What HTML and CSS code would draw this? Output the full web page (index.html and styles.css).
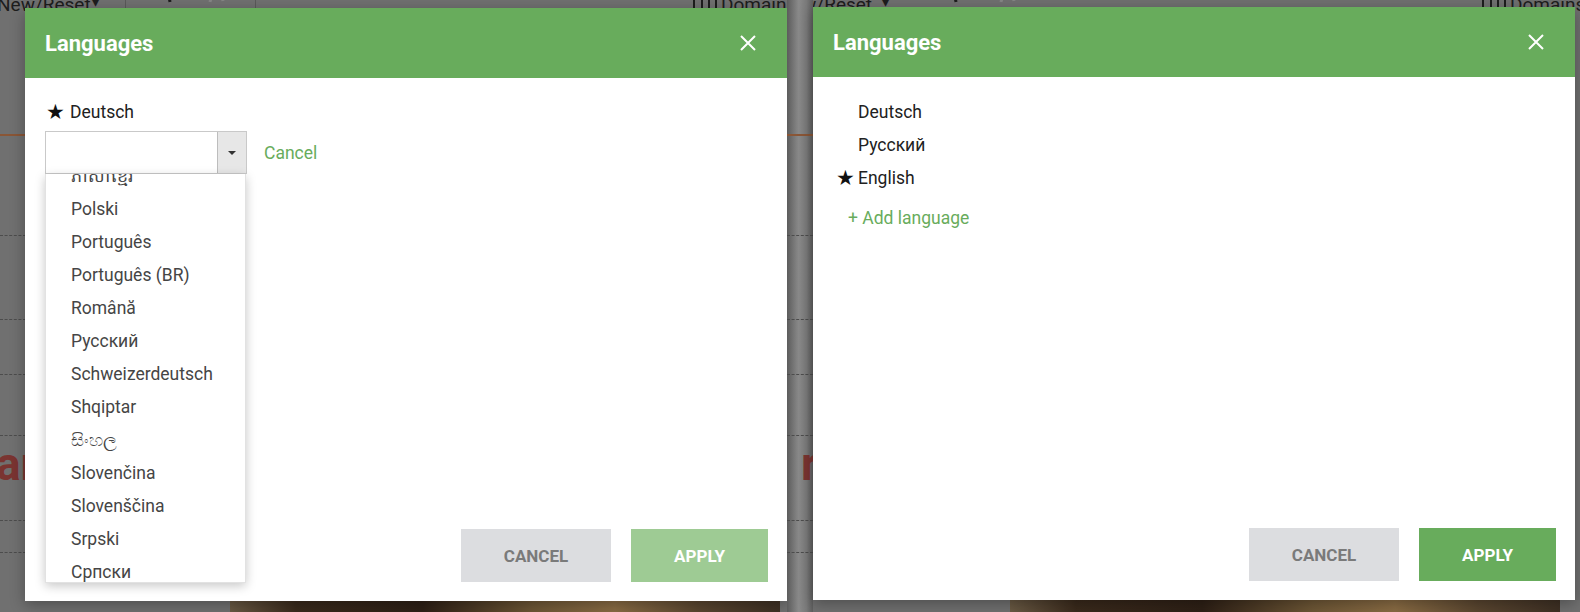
FILE: index.html
```html
<!DOCTYPE html>
<html lang="en">
<head>
    <meta charset="UTF-8">
    <meta name="viewport" content="width=device-width, initial-scale=1.0">
    <title>Languages</title>
    <link rel="stylesheet" href="styles.css">
</head>
<body>
    <div class="screens">

        <!-- left shot: picking a language from the list -->
        <section class="screen screen-left">
            <div class="backdrop">
                <span class="bar-text bar-text-left">New/Reset</span>
                <span class="caret caret-left">&#9662;</span>
                <span class="bar-sep sep-1"></span>
                <svg class="undo undo-left" width="22" height="14" viewBox="0 0 22 14"><path d="M4 2 C8 -4 18 -3 19 6" fill="none" stroke="#1c1c1c" stroke-width="3"/></svg>
                <svg class="redo redo-left" width="18" height="14" viewBox="0 0 18 14"><path d="M2 6 C4 -3 14 -3 15 5" fill="none" stroke="#858585" stroke-width="3"/></svg>
                <span class="bar-sep sep-2"></span>
                <span class="domains domains-left"><span class="grid-icon"></span>Domains</span>
                <span class="orange-line"></span>
                <span class="dash d1"></span>
                <span class="dash d2"></span>
                <span class="dash d3"></span>
                <span class="dash d4"></span>
                <span class="dash d5"></span>
                <span class="dash d6"></span>
                <span class="red-word red-left">ar</span>
                <span class="photo photo-left"></span>
            </div>

            <div class="dialog">
                <div class="dialog-header">
                    <h2 class="dialog-title">Languages</h2>
                    <svg class="close" width="16" height="16" viewBox="0 0 16 16"><path d="M1 1 L15 15 M15 1 L1 15" stroke="#fff" stroke-width="2"/></svg>
                </div>

                <div class="dialog-body body-edit">
                    <div class="lang-row"><span class="star">&#9733;</span>Deutsch</div>

                    <div class="combo-line">
                        <div class="combo">
                            <div class="combo-box">
                                <span class="combo-value"></span>
                                <span class="combo-arrow"><i class="tri"></i></span>
                            </div>
                            <div class="menu">
                                <ul class="menu-list">
                                    <li>ភាសាខ្មែរ</li>
                                    <li>Polski</li>
                                    <li>Português</li>
                                    <li>Português (BR)</li>
                                    <li>Română</li>
                                    <li>Русский</li>
                                    <li>Schweizerdeutsch</li>
                                    <li>Shqiptar</li>
                                    <li>සිංහල</li>
                                    <li>Slovenčina</li>
                                    <li>Slovenščina</li>
                                    <li>Srpski</li>
                                    <li>Српски</li>
                                    <li>Suomi</li>
                                </ul>
                            </div>
                        </div>
                        <a class="link" href="#">Cancel</a>
                    </div>
                </div>

                <div class="dialog-footer">
                    <button class="btn btn-cancel">CANCEL</button>
                    <button class="btn btn-apply" disabled>APPLY</button>
                </div>
            </div>
        </section>

        <!-- right shot: list after adding English -->
        <section class="screen screen-right">
            <div class="backdrop">
                <span class="bar-text bar-text-right">ew/Reset</span>
                <span class="caret caret-right">&#9662;</span>
                <svg class="undo undo-right" width="22" height="14" viewBox="0 0 22 14"><path d="M4 2 C8 -4 18 -3 19 6" fill="none" stroke="#1c1c1c" stroke-width="3"/></svg>
                <svg class="redo redo-right" width="18" height="14" viewBox="0 0 18 14"><path d="M2 6 C4 -3 14 -3 15 5" fill="none" stroke="#858585" stroke-width="3"/></svg>
                <span class="domains domains-right"><span class="grid-icon"></span>Domains</span>
                <span class="strip"></span>
                <span class="orange-line"></span>
                <span class="dash d1"></span>
                <span class="dash d2"></span>
                <span class="dash d3"></span>
                <span class="dash d4"></span>
                <span class="dash d5"></span>
                <span class="dash d6"></span>
                <span class="red-word red-right">r</span>
                <span class="photo photo-right"></span>
            </div>

            <div class="dialog">
                <div class="dialog-header">
                    <h2 class="dialog-title">Languages</h2>
                    <svg class="close" width="16" height="16" viewBox="0 0 16 16"><path d="M1 1 L15 15 M15 1 L1 15" stroke="#fff" stroke-width="2"/></svg>
                </div>

                <div class="dialog-body body-list">
                    <div class="lang-item"><span class="star"></span>Deutsch</div>
                    <div class="lang-item"><span class="star"></span>Русский</div>
                    <div class="lang-item"><span class="star">&#9733;</span>English</div>
                    <a class="link add-link" href="#">+ Add language</a>
                </div>

                <div class="dialog-footer">
                    <button class="btn btn-cancel">CANCEL</button>
                    <button class="btn btn-apply">APPLY</button>
                </div>
            </div>
        </section>

    </div>
</body>
</html>
```

FILE: styles.css
```css
* {
    box-sizing: border-box;
}

body {
    margin: 0;
    font-family: Roboto, "Noto Sans", "DejaVu Sans", sans-serif;
    background-color: #6e6e6e;
    overflow: hidden;
}

.screens {
    display: flex;
    width: 1580px;
    height: 612px;
}

.screen {
    position: relative;
    height: 612px;
    overflow: hidden;
    background-color: #707070;
}

.screen-left {
    width: 787px;
}

.screen-right {
    width: 793px;
}

/* dimmed app behind the dialogs */
.backdrop {
    position: absolute;
    inset: 0;
    z-index: 0;
}

.bar-text {
    position: absolute;
    top: -7px;
    font-size: 19px;
    color: #1d1d1d;
}

.bar-text-left { left: -3px; }
.bar-text-right { left: 5px; }

.caret {
    position: absolute;
    top: -6px;
    font-size: 14px;
    color: #1d1d1d;
}

.caret-left { left: 92px; }
.caret-right { left: 95px; }

.bar-sep {
    position: absolute;
    top: 0;
    width: 1px;
    height: 8px;
    background-color: #5a5a5a;
}

.sep-1 { left: 125px; }
.sep-2 { left: 255px; }

.undo,
.redo {
    position: absolute;
    top: -4px;
}

.undo-left { left: 151px; }
.redo-left { left: 208px; }
.undo-right { left: 150px; }
.redo-right { left: 212px; }

.domains {
    position: absolute;
    top: -7px;
    display: flex;
    align-items: center;
    gap: 4px;
    font-size: 19px;
    color: #1d1d1d;
}

.domains-left { left: 693px; }
.domains-right { left: 695px; }

.grid-icon {
    width: 24px;
    height: 14px;
    border: 2px solid #1d1d1d;
    background: linear-gradient(90deg, transparent 6px, #1d1d1d 6px, #1d1d1d 8px, transparent 8px, transparent 13px, #1d1d1d 13px, #1d1d1d 15px, transparent 15px);
}

.strip {
    position: absolute;
    left: 0;
    top: 0;
    width: 26px;
    height: 612px;
    background: linear-gradient(90deg, #5c5c5c 0, #8a8a8a 45%, #7a7a7a 75%, #5e5e5e 100%);
}

.orange-line {
    position: absolute;
    left: 0;
    top: 134px;
    width: 26px;
    height: 2px;
    background-color: #8a5636;
}

.dash {
    position: absolute;
    left: 0;
    width: 26px;
    border-top: 1px dashed #4c4c4c;
}

.d1 { top: 235px; }
.d2 { top: 319px; }
.d3 { top: 374px; }
.d4 { top: 435px; }
.d5 { top: 520px; }
.d6 { top: 552px; }

.red-word {
    position: absolute;
    top: 437px;
    font-size: 46px;
    font-weight: bold;
    color: #7a3431;
}

.red-left { left: -4px; }
.red-right { left: 14px; }

.photo {
    position: absolute;
    top: 600px;
    height: 12px;
    background: linear-gradient(90deg, #6a5a44 0, #3a2a1c 12%, #2e2016 35%, #6e5736 55%, #8a6c44 70%, #5a4630 85%, #3e3024 100%);
}

.photo-left { left: 230px; width: 550px; }
.photo-right { left: 223px; width: 550px; }

/* dialog */
.dialog {
    position: relative;
    z-index: 1;
    display: flex;
    flex-direction: column;
    width: 762px;
    height: 593px;
    margin: 8px 0 0 25px;
    background-color: #fff;
    box-shadow: 0 4px 14px rgba(0, 0, 0, 0.3);
}

.screen-right .dialog {
    margin: 7px 0 0 26px;
}

.dialog-header {
    flex: none;
    display: flex;
    align-items: center;
    justify-content: space-between;
    height: 70px;
    padding: 0 31px 0 20px;
    background-color: #68ac5c;
}

.dialog-title {
    margin: 0;
    font-size: 22px;
    font-weight: bold;
    color: #fff;
}

.dialog-body {
    flex: 1;
    padding: 0 20px;
    font-size: 17.5px;
    color: #212121;
}

.body-edit {
    padding-top: 23px;
}

.body-list {
    padding-top: 19px;
}

.star {
    display: inline-block;
    width: 25px;
    padding-left: 1px;
    font-family: "DejaVu Sans", sans-serif;
    font-size: 21px;
    line-height: 1;
    vertical-align: -1px;
    color: #111;
}

.lang-row {
    line-height: 22px;
}

.lang-item {
    height: 33px;
    line-height: 33px;
}

.body-list .star {
    padding-left: 3px;
}

.combo-line {
    display: flex;
    align-items: center;
    gap: 17px;
    margin-top: 8px;
}

.combo {
    position: relative;
}

.combo-box {
    display: flex;
    width: 202px;
    height: 43px;
    border: 1px solid #c9c9c9;
    background-color: #fff;
}

.combo-value {
    flex: 1;
}

.combo-arrow {
    display: flex;
    align-items: center;
    justify-content: center;
    width: 29px;
    background-color: #e7e7e7;
    border-left: 1px solid #bdbdbd;
}

.tri {
    width: 0;
    height: 0;
    border-left: 4px solid transparent;
    border-right: 4px solid transparent;
    border-top: 4px solid #333;
}

/* open list of the combo box */
.menu {
    position: absolute;
    top: 100%;
    left: 0;
    z-index: 2;
    width: 201px;
    height: 409px;
    overflow: hidden;
    background-color: #fff;
    border: 1px solid #e2e2e2;
    border-top: none;
    box-shadow: 0 3px 10px rgba(0, 0, 0, 0.22);
}

.menu-list {
    list-style: none;
    margin: -14px 0 0;
    padding: 0;
}

.menu-list li {
    height: 33px;
    line-height: 33px;
    padding-left: 25px;
    font-size: 17.5px;
    color: #454545;
    white-space: nowrap;
}

.link {
    color: #68ac5c;
    text-decoration: none;
}

.add-link {
    display: block;
    margin-top: 7px;
    padding-left: 15px;
    line-height: 33px;
    font-size: 17.5px;
}

.dialog-footer {
    flex: none;
    display: flex;
    justify-content: flex-end;
    gap: 20px;
    padding: 0 19px 19px 0;
}

.btn {
    height: 53px;
    border: none;
    border-radius: 0;
    font-family: Roboto, sans-serif;
    font-size: 17px;
    font-weight: bold;
    cursor: pointer;
}

.btn-cancel {
    width: 150px;
    background-color: #dcdde0;
    color: #7a7a7a;
}

.btn-apply {
    width: 137px;
    background-color: #68ac5c;
    color: #fff;
}

.btn-apply:disabled {
    background-color: #9ecb94;
    cursor: default;
}
```
